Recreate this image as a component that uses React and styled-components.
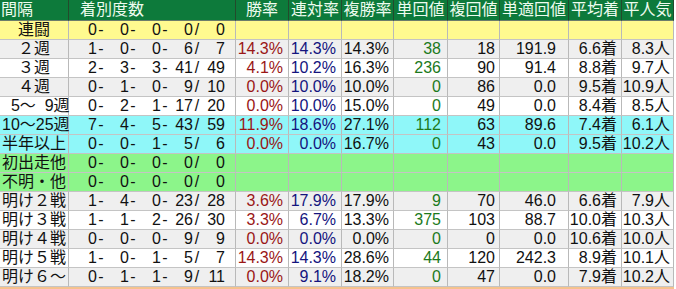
import React from "react";
import styled, { createGlobalStyle } from "styled-components";

const GlobalStyle = createGlobalStyle`
  html, body { margin: 0; padding: 0; background: #ffffff; }
  body { font-family: "Liberation Sans", "Noto Sans CJK JP", sans-serif; }
`;

const COLS = "69px 167px 53px 53px 52px 54px 52px 69px 53px 52px";

const ROW_BG = {
  header: "#0d7a3b",
  yellow: "#fffa8f",
  grey: "#efefef",
  white: "#ffffff",
  cyan: "#8ff7f9",
  green: "#8cf58a",
  orange: "#f5c28e",
};

const TONES = {
  plain: "#111111",
  red: "#9a1616",
  navy: "#14147e",
  green: "#1c7a1c",
};

const Sheet = styled.div`
  display: flex;
  flex-direction: column;
  width: 674px;
  font-family: "Liberation Sans", "Noto Sans CJK JP", sans-serif;
  font-size: 16px;
`;

const Row = styled.div`
  display: grid;
  grid-template-columns: ${COLS};
  background: ${(p) => ROW_BG[p.$bg]};
  height: ${(p) => (p.$head ? "21px" : "19px")};
`;

const HeadCell = styled.div`
  box-sizing: border-box;
  display: flex;
  align-items: center;
  justify-content: ${(p) => (p.$align === "left" ? "flex-start" : "center")};
  padding-left: ${(p) => p.$pad || 0}px;
  border-right: 1px solid #234a2c;
  border-bottom: 1px solid #6b7d6b;
  color: #eefcef;
  line-height: 18px;
  white-space: pre;
`;

const Cell = styled.div`
  box-sizing: border-box;
  display: flex;
  align-items: center;
  justify-content: ${(p) => (p.$align === "left" ? "flex-start" : "flex-end")};
  padding-left: ${(p) => (p.$align === "left" ? 2 : 0)}px;
  padding-right: ${(p) => p.$pad || 0}px;
  border-right: 1px solid #b9b9b9;
  border-bottom: 1px solid #c4c4c4;
  color: ${(p) => TONES[p.$tone || "plain"]};
  line-height: 18px;
  white-space: pre;
`;

const Record = styled(Cell)`
  justify-content: flex-end;
  padding-right: 10px;
`;

const Num = styled.span`
  display: inline-block;
  width: 24px;
  text-align: right;
`;

const Sep = styled.span`
  display: inline-block;
  width: 8px;
  text-align: center;
`;

const Tail = styled.div`
  height: 2px;
  width: 674px;
  background: ${ROW_BG.orange};
`;

const HEADERS = [
  { t: "間隔", align: "left", pad: 1 },
  { t: "着別度数", align: "left", pad: 11 },
  { t: "勝率" },
  { t: "連対率" },
  { t: "複勝率" },
  { t: "単回値" },
  { t: "複回値" },
  { t: "単適回値" },
  { t: "平均着" },
  { t: "平人気" },
];

const ROWS = [
  { bg: "yellow", label: "　連闘", rec: [0, 0, 0, 0, 0] },
  { bg: "grey", label: "　２週", rec: [1, 0, 0, 6, 7], v: ["14.3%", "14.3%", "14.3%", "38", "18", "191.9", "6.6着", "8.3人"] },
  { bg: "white", label: "　３週", rec: [2, 3, 3, 41, 49], v: ["4.1%", "10.2%", "16.3%", "236", "90", "91.4", "8.8着", "9.7人"] },
  { bg: "grey", label: "　４週", rec: [0, 1, 0, 9, 10], v: ["0.0%", "10.0%", "10.0%", "0", "86", "0.0", "9.5着", "10.9人"] },
  { bg: "white", label: "  5～  9週", rec: [0, 2, 1, 17, 20], v: ["0.0%", "10.0%", "15.0%", "0", "49", "0.0", "8.4着", "8.5人"] },
  { bg: "cyan", label: "10～25週", rec: [7, 4, 5, 43, 59], v: ["11.9%", "18.6%", "27.1%", "112", "63", "89.6", "7.4着", "6.1人"] },
  { bg: "cyan", label: "半年以上", rec: [0, 0, 1, 5, 6], v: ["0.0%", "0.0%", "16.7%", "0", "43", "0.0", "9.5着", "10.2人"] },
  { bg: "green", label: "初出走他", rec: [0, 0, 0, 0, 0] },
  { bg: "green", label: "不明・他", rec: [0, 0, 0, 0, 0] },
  { bg: "grey", label: "明け２戦", rec: [1, 4, 0, 23, 28], v: ["3.6%", "17.9%", "17.9%", "9", "70", "46.0", "6.6着", "7.9人"] },
  { bg: "white", label: "明け３戦", rec: [1, 1, 2, 26, 30], v: ["3.3%", "6.7%", "13.3%", "375", "103", "88.7", "10.0着", "10.3人"] },
  { bg: "grey", label: "明け４戦", rec: [0, 0, 0, 9, 9], v: ["0.0%", "0.0%", "0.0%", "0", "0", "0.0", "10.6着", "10.0人"] },
  { bg: "white", label: "明け５戦", rec: [1, 0, 1, 5, 7], v: ["14.3%", "14.3%", "28.6%", "44", "120", "242.3", "8.9着", "10.1人"] },
  { bg: "grey", label: "明け６～", rec: [0, 1, 1, 9, 11], v: ["0.0%", "9.1%", "18.2%", "0", "47", "0.0", "7.9着", "10.2人"] },
];

const VALUE_COLS = [
  { tone: "red", pad: 5 },
  { tone: "navy", pad: 5 },
  { tone: "plain", pad: 4 },
  { tone: "green", pad: 6 },
  { tone: "plain", pad: 4 },
  { tone: "plain", pad: 12 },
  { tone: "plain", pad: 4 },
  { tone: "plain", pad: 3 },
];

function RecordCell({ rec }) {
  const [a, b, c, d, n] = rec;
  return (
    <Record>
      <Num>{a}</Num><Sep>-</Sep>
      <Num>{b}</Num><Sep>-</Sep>
      <Num>{c}</Num><Sep>-</Sep>
      <Num>{d}</Num><Sep>/</Sep>
      <Num>{n}</Num>
    </Record>
  );
}

export default function App() {
  return (
    <>
      <GlobalStyle />
      <Sheet>
        <Row $bg="header" $head>
          {HEADERS.map((h) => (
            <HeadCell key={h.t} $align={h.align} $pad={h.pad}>
              {h.t}
            </HeadCell>
          ))}
        </Row>
        {ROWS.map((r) => (
          <Row key={r.label} $bg={r.bg}>
            <Cell $align="left">{r.label}</Cell>
            <RecordCell rec={r.rec} />
            {VALUE_COLS.map((c, i) => (
              <Cell key={i} $tone={c.tone} $pad={c.pad}>
                {r.v ? r.v[i] : ""}
              </Cell>
            ))}
          </Row>
        ))}
        <Tail />
      </Sheet>
    </>
  );
}
